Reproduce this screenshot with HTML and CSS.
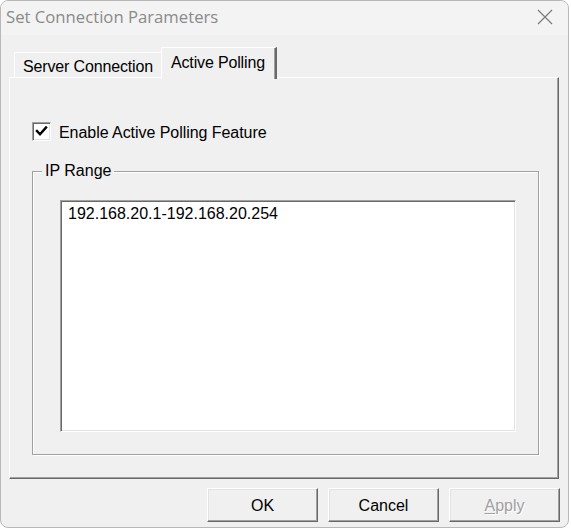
FILE: index.html
```html
<!DOCTYPE html>
<html>
<head>
<meta charset="utf-8">
<link rel="stylesheet" href="styles.css">
</head>
<body>
<div class="window">
  <div class="titlebar">
    <span class="title">Set Connection Parameters</span>
    <svg class="close" width="16" height="16" viewBox="0 0 16 16"><path d="M1 1 L15 15 M15 1 L1 15" stroke="#7a7a7a" stroke-width="1.2" fill="none"/></svg>
  </div>
  <div class="tabs">
    <div class="tab">Server Connection</div>
    <div class="tab active">Active Polling</div>
  </div>
  <div class="panel">
    <div class="check-row">
      <span class="checkbox"><svg width="13" height="13" viewBox="0 0 13 13"><path d="M2 6 L5 9.2 L11 2.5" stroke="#000" stroke-width="2.4" fill="none" stroke-linecap="square"/></svg></span>
      <span class="check-label">Enable Active Polling Feature</span>
    </div>
    <fieldset class="group">
      <legend>IP Range</legend>
      <div class="listbox">192.168.20.1-192.168.20.254</div>
    </fieldset>
  </div>
  <div class="buttons">
    <div class="btn">OK</div>
    <div class="btn">Cancel</div>
    <div class="btn disabled"><u>A</u>pply</div>
  </div>
</div>
</body>
</html>
```
FILE: styles.css
```css
html, body {
  margin: 0;
  padding: 0;
  background: #ffffff;
}
body {
  width: 571px;
  height: 529px;
  overflow: hidden;
  font-family: "Liberation Sans", Arial, sans-serif;
  font-size: 16px;
  color: #000;
}
.window {
  width: 569px;
  height: 528px;
  box-sizing: border-box;
  border: 1px solid #b8b8b8;
  border-radius: 8px;
  background: #f0f0f0;
  overflow: hidden;
  display: flex;
  flex-direction: column;
}
.titlebar {
  height: 34px;
  background: #f3f3f3;
  display: flex;
  align-items: center;
  justify-content: space-between;
  padding-left: 5px;
  padding-right: 15px;
  flex-shrink: 0;
}
.title {
  font-family: "Open Sans", "Noto Sans", sans-serif;
  font-size: 16.7px;
  color: #8a8a8a;
  margin-top: -3px;
}
.close {
  margin-top: -2px;
}
.tabs {
  display: flex;
  align-items: flex-end;
  height: 30px;
  margin-top: 12px;
  padding-left: 13px;
  position: relative;
  z-index: 1;
}
.tab {
  height: 25px;
  box-sizing: border-box;
  padding: 5px 8px 0 8px;
  border-top: 1px solid #ffffff;
  border-left: 1px solid #ffffff;
  border-top-left-radius: 2px;
  white-space: nowrap;
  letter-spacing: -0.15px;
}
.tab.active {
  height: 32px;
  margin-bottom: -2px;
  padding: 6px 10px 0 9px;
  border-right: 2px solid #696969;
  box-shadow: inset -1px 0 #a0a0a0;
  background: #f0f0f0;
}
.panel {
  margin-left: 8px;
  width: 550px;
  height: 402px;
  box-sizing: border-box;
  border-top: 1px solid #ffffff;
  border-left: 1px solid #ffffff;
  border-right: 1px solid #696969;
  border-bottom: 1px solid #696969;
  box-shadow: inset -1px -1px #a0a0a0;
  padding: 44px 0 0 22px;
  flex-shrink: 0;
}
.check-row {
  display: flex;
  align-items: center;
  height: 19px;
}
.checkbox {
  width: 19px;
  height: 19px;
  box-sizing: border-box;
  background: #fff;
  border-top: 1px solid #a0a0a0;
  border-left: 1px solid #a0a0a0;
  border-right: 1px solid #ffffff;
  border-bottom: 1px solid #ffffff;
  box-shadow: inset 1px 1px #696969, inset -1px -1px #e3e3e3;
  display: flex;
  align-items: center;
  justify-content: center;
}
.check-label {
  margin-left: 8px;
  margin-top: 2px;
  letter-spacing: -0.05px;
}
.group {
  margin: 21px 0 0 0;
  padding: 0 21px 22px 27px;
  width: 507px;
  box-sizing: border-box;
  border: 1px solid #a0a0a0;
  box-shadow: inset 1px 1px #ffffff, 1px 1px #ffffff;
  min-width: 0;
}
.group legend {
  margin-left: -18px;
  padding: 0 3px;
  line-height: 18px;
  background: #f0f0f0;
}
.listbox {
  margin-top: 20px;
  width: 456px;
  height: 232px;
  box-sizing: border-box;
  background: #ffffff;
  border-top: 1px solid #a0a0a0;
  border-left: 1px solid #a0a0a0;
  border-right: 1px solid #ffffff;
  border-bottom: 1px solid #ffffff;
  box-shadow: inset 1px 1px #696969, inset -1px -1px #e3e3e3;
  padding: 4px 0 0 7px;
  line-height: 18px;
}
.buttons {
  display: flex;
  justify-content: flex-end;
  gap: 10px;
  margin-top: 9px;
  padding-right: 8px;
}
.btn {
  width: 111px;
  height: 34px;
  box-sizing: border-box;
  border-top: 1px solid #ffffff;
  border-left: 1px solid #ffffff;
  border-right: 1px solid #696969;
  border-bottom: 1px solid #696969;
  box-shadow: inset -1px -1px #a0a0a0, inset 1px 1px #e3e3e3;
  display: flex;
  align-items: center;
  justify-content: center;
  padding-top: 1px;
}
.btn.disabled {
  color: #a0a0a0;
  text-shadow: 1px 1px #ffffff;
}
.btn u {
  text-decoration-thickness: 1px;
  text-underline-offset: 2px;
}
```
